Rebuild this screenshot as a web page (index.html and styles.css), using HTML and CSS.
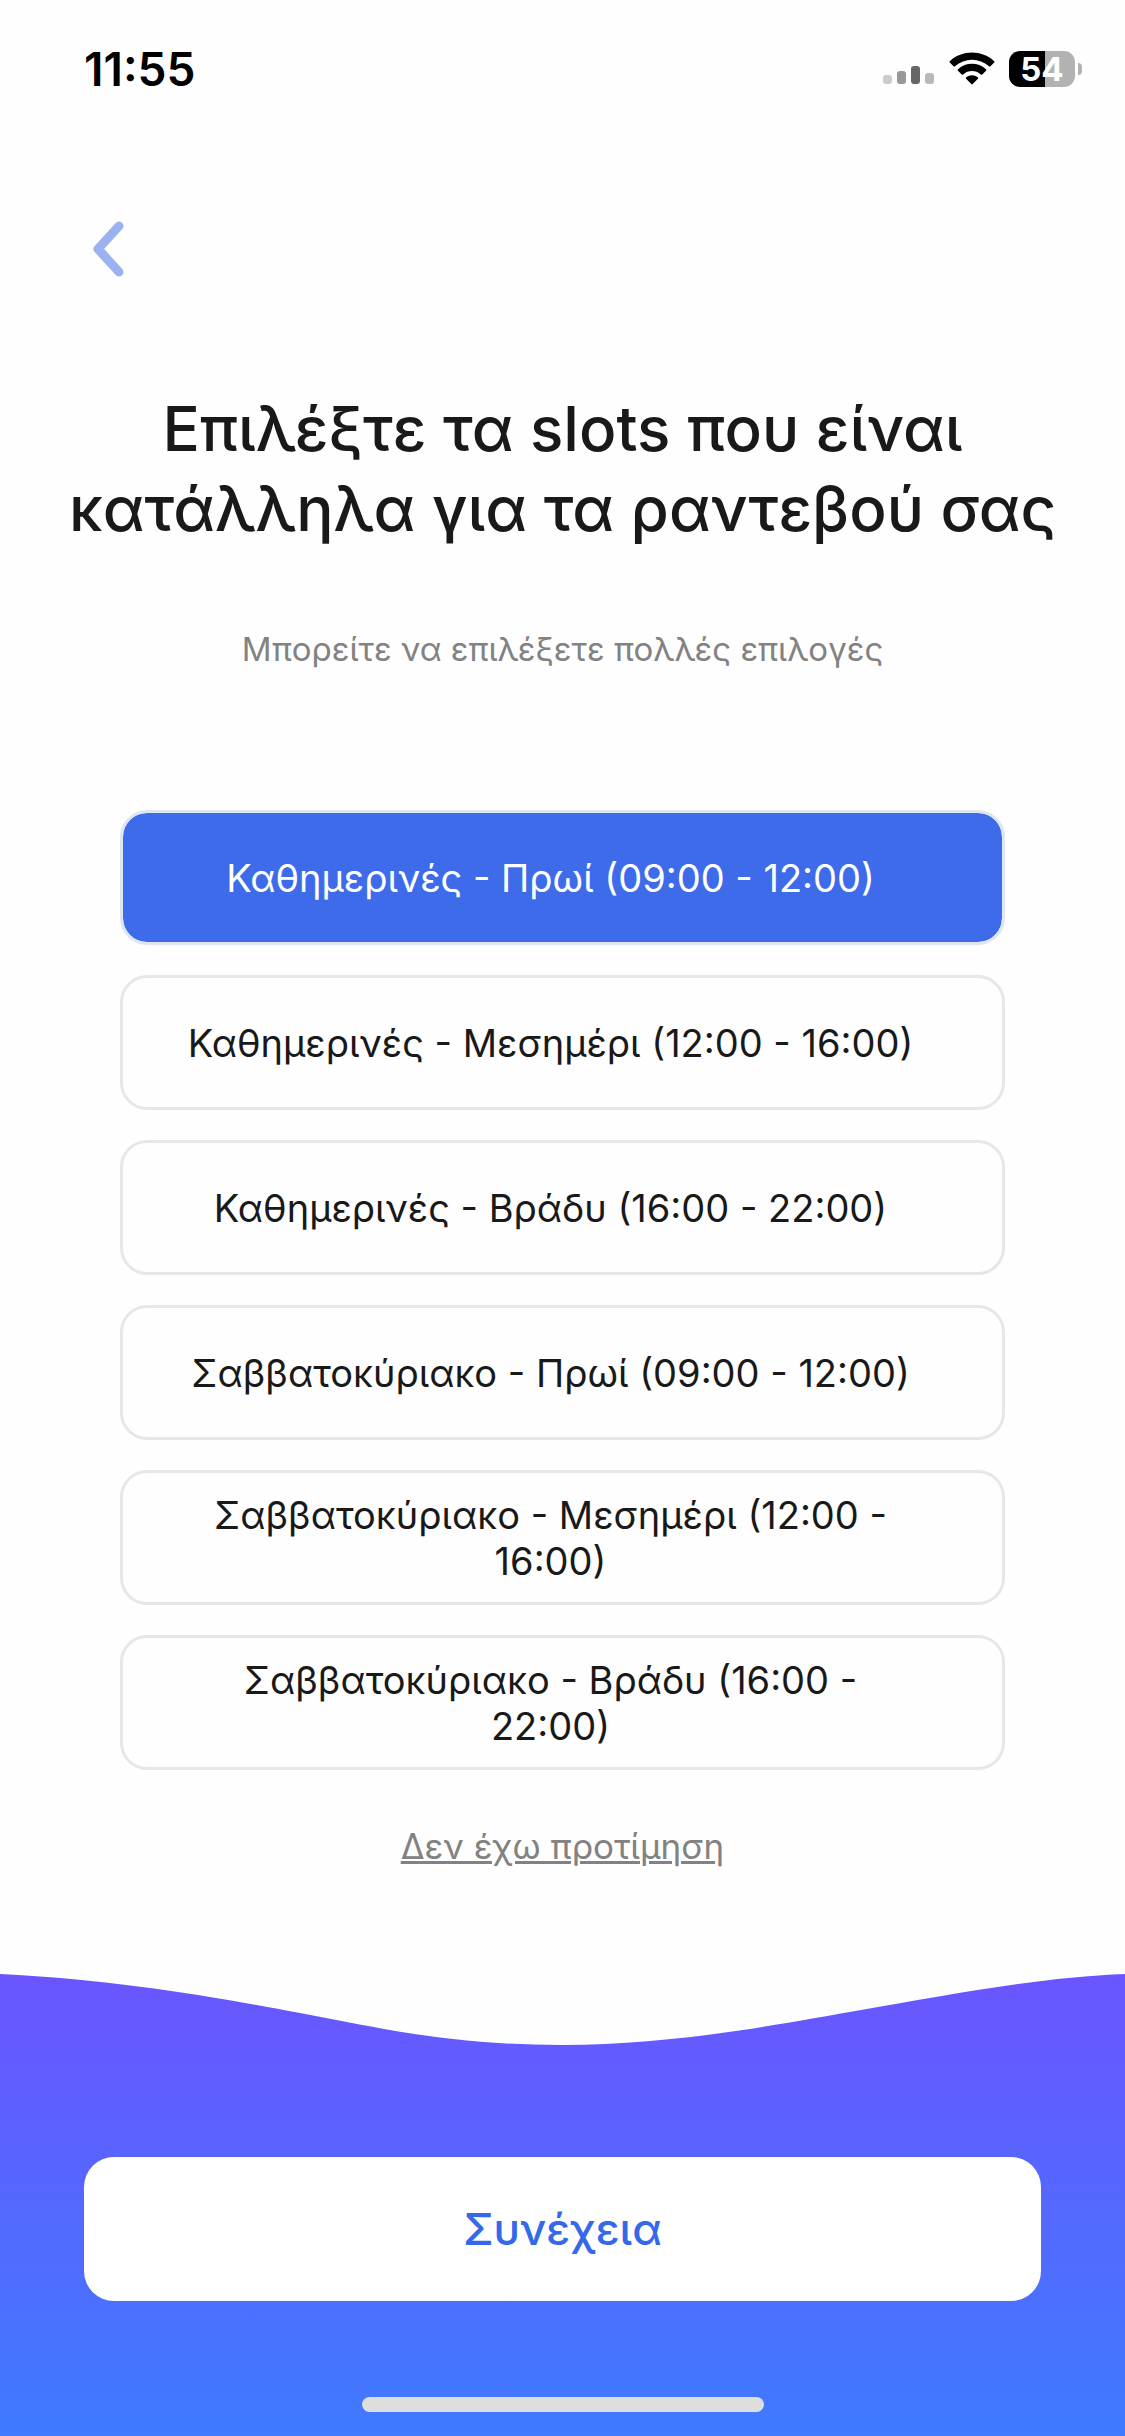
FILE: index.html
```html
<!DOCTYPE html>
<html lang="el">
<head>
<meta charset="utf-8">
<meta name="viewport" content="width=device-width, initial-scale=1">
<title>Επιλογή slots</title>
<link rel="stylesheet" href="styles.css">
</head>
<body>
<div class="screen">
  <header class="status">
    <time class="clock">11:55</time>
    <div class="indicators">
      <svg class="signal" width="52" height="20" viewBox="0 0 52 20" aria-hidden="true">
        <rect x="0" y="10" width="9" height="9" rx="3" fill="#cbcbcb"/>
        <rect x="14" y="6" width="9" height="13" rx="3" fill="#989898"/>
        <rect x="28" y="1" width="9" height="18" rx="3" fill="#666"/>
        <rect x="42" y="8" width="9" height="11" rx="3" fill="#b9b9b9"/>
      </svg>
      <svg class="wifi" width="46" height="34" viewBox="0 0 46 34" aria-hidden="true">
        <path d="M.8 10.600a1 1 0 0 1 0-1.400C13.500-2.300 32.500-2.300 45.200 9.200a1 1 0 0 1 0 1.400l-3.700 3.700a1 1 0 0 1-1.400 0C30.300 5.500 15.700 5.500 5.900 14.300a1 1 0 0 1-1.400 0z"/>
        <path d="M9 18.700a1 1 0 0 1 0-1.500c8-7.100 20-7.100 28 0a1 1 0 0 1 0 1.500l-3.700 3.700a1 1 0 0 1-1.400 0c-5.100-4.500-12.700-4.500-17.800 0a1 1 0 0 1-1.400 0z"/>
        <path d="M17.100 26.800a1 1 0 0 1 .1-1.500c3.400-2.800 8.200-2.800 11.600 0a1 1 0 0 1 .1 1.500l-5.200 5.300a1 1 0 0 1-1.400 0z"/>
      </svg>
      <div class="battery"><span class="battery-body">54</span><span class="battery-tip"></span></div>
    </div>
  </header>

  <nav class="nav">
    <button class="back" type="button" aria-label="Πίσω">
      <svg width="32" height="56" viewBox="0 0 32 56" aria-hidden="true"><path d="M27 5 6 28l21 23"/></svg>
    </button>
  </nav>

  <main class="content">
    <h1 class="title">Επιλέξτε τα slots που είναι κατάλληλα για τα ραντεβού σας</h1>
    <p class="subtitle">Μπορείτε να επιλέξετε πολλές επιλογές</p>
    <div class="options">
      <button class="option selected" type="button" aria-pressed="true">Καθημερινές - Πρωί (09:00 - 12:00)</button>
      <button class="option" type="button" aria-pressed="false">Καθημερινές - Μεσημέρι (12:00 - 16:00)</button>
      <button class="option" type="button" aria-pressed="false">Καθημερινές - Βράδυ (16:00 - 22:00)</button>
      <button class="option" type="button" aria-pressed="false">Σαββατοκύριακο - Πρωί (09:00 - 12:00)</button>
      <button class="option" type="button" aria-pressed="false">Σαββατοκύριακο - Μεσημέρι (12:00 - 16:00)</button>
      <button class="option" type="button" aria-pressed="false">Σαββατοκύριακο - Βράδυ (16:00 - 22:00)</button>
    </div>
    <a class="skip" href="#">Δεν έχω προτίμηση</a>
  </main>

  <footer class="footer">
    <svg class="wave" viewBox="0 0 1125 72" preserveAspectRatio="none" aria-hidden="true">
      <path d="M0 0C120 6 220 24 300 39S450 71 562 71 780 50 861 36 1040 3 1125 0z"/>
    </svg>
    <button class="continue" type="button">Συνέχεια</button>
    <div class="home-bar"></div>
  </footer>
</div>
</body>
</html>
```
FILE: styles.css
```css
* {
  box-sizing: border-box;
}

body {
  margin: 0;
  background: #fefefe;
  color: #191919;
  font-family: Inter, "Liberation Sans", sans-serif;
}

button {
  margin: 0;
  border: 0;
  font: inherit;
  color: inherit;
  cursor: pointer;
}

.screen {
  display: flex;
  flex-direction: column;
  min-height: 100vh;
}

.status {
  display: flex;
  justify-content: space-between;
  align-items: center;
  height: 138px;
  padding: 0 43px 0 84px;
}

.clock {
  color: #000;
  font-size: 46px;
  font-weight: 600;
}

.indicators {
  display: flex;
  align-items: center;
  gap: 14px;
}

.signal {
  margin-top: 12px;
}

.battery {
  display: flex;
  align-items: center;
  gap: 3px;
}

.battery-body {
  width: 66px;
  border-radius: 11px;
  background: linear-gradient(90deg, #000 54%, #b2b2b2 54%);
  color: #fff;
  font-size: 33px;
  font-weight: 700;
  line-height: 36px;
  text-align: center;
}

.battery-tip {
  width: 4px;
  height: 12px;
  border-radius: 0 4px 4px 0;
  background: #b2b2b2;
}

.nav {
  padding: 83px 92px 0;
}

.back {
  display: block;
  padding: 0;
  background: none;
}

.back svg {
  display: block;
  fill: none;
  stroke: #9bb1f0;
  stroke-width: 9;
  stroke-linecap: round;
  stroke-linejoin: round;
}

.content {
  display: flex;
  flex-direction: column;
  align-items: center;
  padding: 112px 60px 0;
  text-align: center;
}

.title {
  margin: 0;
  font-size: 62px;
  font-weight: 500;
  line-height: 80px;
}

.subtitle {
  margin: 80px 0 0;
  color: #828282;
  font-size: 33px;
  line-height: 40px;
}

.options {
  display: flex;
  flex-direction: column;
  gap: 30px;
  align-self: stretch;
  margin: 141px 60px 0;
}

.option {
  min-height: 135px;
  padding: 0 84px 0 60px;
  border: 3px solid #e7e7e7;
  border-radius: 27px;
  background: transparent;
  font-size: 38px;
  line-height: 46px;
}

.option.selected {
  border-color: #dfe6f2;
  background: #3d6bea;
  background-clip: padding-box;
  color: #fff;
}

.skip {
  margin-top: 54px;
  color: #828282;
  font-size: 35px;
  line-height: 44px;
  text-decoration-thickness: 3px;
}

.footer {
  display: flex;
  flex-direction: column;
  align-items: center;
  margin-top: auto;
  padding-bottom: 24px;
  background: linear-gradient(#6a55ff, #3f7aff);
}

.wave {
  display: block;
  width: 100%;
  height: 72px;
  fill: #fefefe;
}

.continue {
  align-self: stretch;
  height: 144px;
  margin: 111px 84px 96px;
  border-radius: 30px;
  background: #fff;
  color: #3469ea;
  font-size: 44px;
  font-weight: 500;
}

.home-bar {
  width: 402px;
  max-width: 60%;
  height: 15px;
  border-radius: 8px;
  background: #dededf;
}
```
